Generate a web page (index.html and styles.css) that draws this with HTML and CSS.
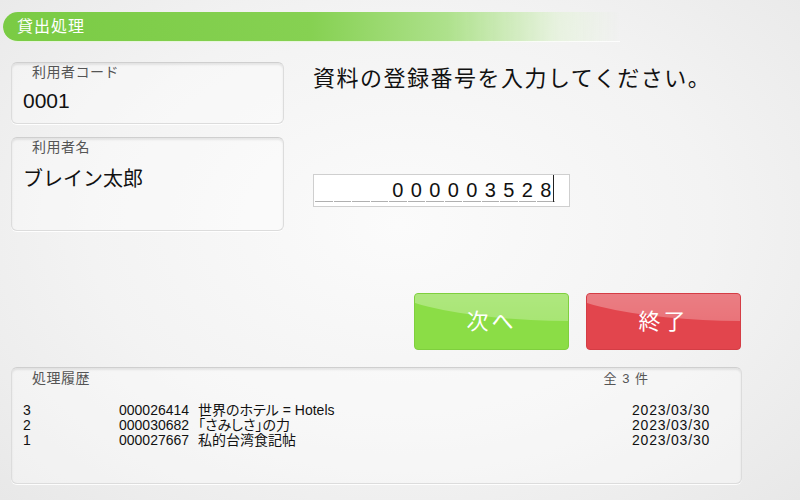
FILE: index.html
```html
<!DOCTYPE html>
<html lang="ja">
<head>
  <meta charset="UTF-8">
  <meta name="viewport" content="width=device-width, initial-scale=1.0">
  <title>貸出処理</title>
  <link rel="stylesheet" href="styles.css">
</head>
<body>
  <div id="page">
    <div class="title-bar">貸出処理</div>
    <div id="main">
      <div class="side">
        <div class="panel panel-code">
          <div class="label">利用者コード</div>
          <div class="value value-code">0001</div>
        </div>
        <div class="panel panel-name">
          <div class="label">利用者名</div>
          <div class="value value-name">ブレイン太郎</div>
        </div>
      </div>
      <div class="entry">
        <div class="prompt">資料の登録番号を入力してください。</div>
        <div class="code-input">
          <span class="cell"></span><span class="cell"></span><span class="cell"></span><span class="cell"></span><span class="cell">0</span><span class="cell">0</span><span class="cell">0</span><span class="cell">0</span><span class="cell">0</span><span class="cell">3</span><span class="cell">5</span><span class="cell">2</span><span class="cell">8</span><span class="caret"></span>
        </div>
        <div class="buttons">
          <div class="btn btn-next">次へ</div>
          <div class="btn btn-end">終了</div>
        </div>
      </div>
    </div>
    <div class="panel history">
      <div class="history-head">
        <div class="label">処理履歴</div>
        <div class="count">全 3 件</div>
      </div>
      <div class="rows">
        <div class="row"><span>3</span><span>000026414</span><span class="book">世界のホテル = Hotels</span><span class="date">2023/03/30</span></div>
        <div class="row"><span>2</span><span>000030682</span><span class="book">「さみしさ」の力</span><span class="date">2023/03/30</span></div>
        <div class="row"><span>1</span><span>000027667</span><span class="book">私的台湾食記帖</span><span class="date">2023/03/30</span></div>
      </div>
    </div>
  </div>
</body>
</html>
```

FILE: styles.css
```css
html,
body {
  margin: 0;
  padding: 0;
}
body {
  width: 800px;
  height: 500px;
  overflow: hidden;
  font-family: 'Liberation Sans', 'Noto Sans CJK JP', sans-serif;
  color: #111;
  background: radial-gradient(ellipse at 50% 45%, #fbfbfb 0%, #f3f3f3 55%, #e8e8e8 100%);
}
#page {
  padding-top: 12px;
}
.title-bar {
  margin-left: 3px;
  width: 603px;
  height: 29px;
  padding-left: 14px;
  line-height: 29px;
  font-size: 16px;
  letter-spacing: 1px;
  color: #fff;
  border-radius: 15px 0 0 15px;
  border-bottom: 1px solid rgba(255, 255, 255, .8);
  background: linear-gradient(90deg, #7acb44 0%, #86d152 50%, #aee18c 72%, rgba(225, 242, 212, .6) 90%, rgba(255, 255, 255, 0) 100%);
}
#main {
  display: flex;
  margin-top: 20px;
  padding-left: 11px;
  gap: 29px;
}
.side {
  display: flex;
  flex-direction: column;
  gap: 13px;
  width: 273px;
}
.panel {
  box-sizing: border-box;
  background: rgba(255, 255, 255, .35);
  border: 1px solid #dcdcdc;
  border-top-color: #cfcfcf;
  border-radius: 6px;
  box-shadow: inset 0 2px 2px rgba(0, 0, 0, .08), 0 1px 0 rgba(255, 255, 255, .9);
}
.panel-code {
  height: 62px;
}
.panel-name {
  height: 94px;
}
.label {
  padding: 1px 0 0 20px;
  line-height: 17px;
  font-size: 14px;
  letter-spacing: .5px;
  color: #555;
}
.value {
  padding-left: 11px;
  line-height: 24px;
}
.value-code {
  margin-top: 8px;
  font-size: 21px;
}
.value-name {
  margin-top: 11px;
  font-size: 20px;
}
.entry {
  display: flex;
  flex-direction: column;
  align-items: flex-start;
}
.prompt {
  margin-top: 3px;
  line-height: 28px;
  font-size: 22px;
  letter-spacing: 1.5px;
}
.code-input {
  display: flex;
  align-items: flex-end;
  box-sizing: border-box;
  margin-top: 81px;
  width: 257px;
  height: 33px;
  padding: 0 0 4px 1px;
  background: #fff;
  border: 1px solid #cfcfcf;
}
.cell {
  display: block;
  width: 17.5px;
  height: 22px;
  margin-right: 1px;
  line-height: 22px;
  font-size: 20px;
  text-align: center;
  border-bottom: 1px solid #b0b0b0;
}
.caret {
  display: block;
  width: 0;
  height: 27px;
  margin-left: -3px;
  border-left: 1px solid #222;
}
.buttons {
  display: flex;
  gap: 17px;
  margin: 86px 0 0 101px;
}
.btn {
  position: relative;
  overflow: hidden;
  box-sizing: border-box;
  width: 155px;
  height: 57px;
  line-height: 55px;
  font-size: 22px;
  letter-spacing: 3px;
  text-align: center;
  color: #fff;
  border-radius: 4px;
}
.btn::before {
  content: '';
  position: absolute;
  left: -45px;
  top: -71px;
  width: 400px;
  height: 98px;
  border-radius: 50%;
  background: linear-gradient(rgba(255, 255, 255, .45), rgba(255, 255, 255, .25));
}
.btn-next {
  background: #8bdd46;
  border: 1px solid #7fcf3e;
}
.btn-end {
  background: #e2454d;
  border: 1px solid #d43d45;
}
.history {
  margin: 17px 0 0 11px;
  width: 731px;
  height: 117px;
}
.history-head {
  display: flex;
  justify-content: space-between;
  padding-right: 92px;
}
.history-head .label {
  padding-top: 2px;
}
.count {
  padding-top: 3px;
  line-height: 16px;
  font-size: 13px;
  color: #555;
  letter-spacing: 1px;
}
.rows {
  margin-top: 16px;
  padding-left: 11px;
}
.row {
  display: grid;
  grid-template-columns: 96px 79px 434px auto;
  line-height: 15px;
  font-size: 14px;
}
.book {
  font-feature-settings: 'palt';
}
.date {
  letter-spacing: .8px;
}
```
